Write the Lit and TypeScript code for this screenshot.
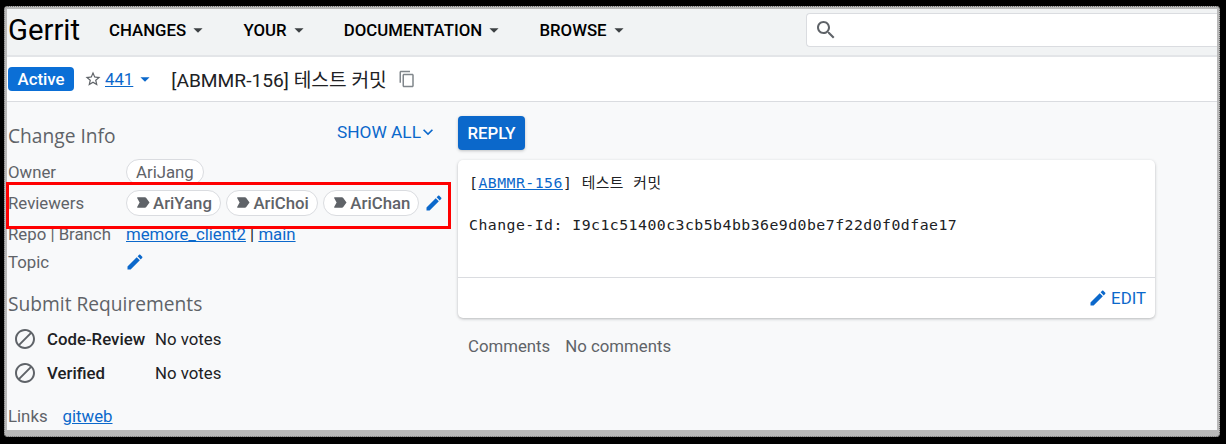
import { LitElement, html, css, svg } from 'lit'
import { customElement } from 'lit/decorators.js'

const EDIT = 'M3 17.25V21h3.75L17.81 9.94l-3.75-3.75L3 17.25zM20.71 7.04c.39-.39.39-1.02 0-1.41l-2.34-2.34c-.39-.39-1.02-.39-1.41 0l-1.83 1.83 3.75 3.75 1.83-1.83z'
const SEARCH = 'M15.5 14h-.79l-.28-.27C15.41 12.59 16 11.11 16 9.5 16 5.91 13.09 3 9.5 3S3 5.91 3 9.5 5.91 16 9.5 16c1.61 0 3.09-.59 4.23-1.57l.27.28v.79l5 4.99L20.49 19l-4.99-5zm-6 0C7.01 14 5 11.99 5 9.5S7.01 5 9.5 5 14 7.01 14 9.5 11.99 14 9.5 14z'
const STAR = 'M22 9.24l-7.19-.62L12 2 9.19 8.63 2 9.24l5.46 4.73L5.82 21 12 17.27 18.18 21l-1.63-7.03L22 9.24zM12 15.4l-3.76 2.27 1-4.28-3.32-2.88 4.38-.38L12 6.1l1.71 4.04 4.38.38-3.32 2.88 1 4.28L12 15.4z'
const COPY = 'M16 1H4c-1.1 0-2 .9-2 2v14h2V3h12V1zm3 4H8c-1.1 0-2 .9-2 2v14c0 1.1.9 2 2 2h11c1.1 0 2-.9 2-2V7c0-1.1-.9-2-2-2zm0 16H8V7h11v14z'
const BLOCK = 'M12 2C6.48 2 2 6.48 2 12s4.48 10 10 10 10-4.48 10-10S17.52 2 12 2zM4 12c0-4.42 3.58-8 8-8 1.85 0 3.55.63 4.9 1.69L5.69 16.9C4.63 15.55 4 13.85 4 12zm8 8c-1.85 0-3.55-.63-4.9-1.69L18.31 7.1C19.37 8.45 20 10.15 20 12c0 4.42-3.58 8-8 8z'
const ATTENTION = 'M4 4.5h10c.8 0 1.5.4 1.9 1L20.5 12l-4.6 6.5c-.4.6-1.1 1-1.9 1H4c-.8 0-1.2-.9-.8-1.5L6.5 12 3.2 6C2.8 5.4 3.2 4.5 4 4.5z'
const DROP = 'M7 10l5 5 5-5z'
const CHEVRON = 'M7.41 8.59L12 13.17l4.59-4.58L18 10l-6 6-6-6z'

const icon = (d: string, cls = '') => html`<svg class="icon ${cls}" viewBox="0 0 24 24">${svg`<path d=${d}></path>`}</svg>`

@customElement('app-root')
export class AppRoot extends LitElement {
  static styles = css`
    :host {
      display: block;
      width: 1226px;
      height: 444px;
      background: #000;
      font-family: Roboto, "Noto Sans CJK KR", sans-serif;
      font-size: 16.8px;
      color: #202124;
      overflow: hidden;
    }

    .frame {
      position: relative;
      box-sizing: border-box;
      width: 1216px;
      height: 431px;
      margin: 6px 0 0 4px;
      border: 3px solid #b9b9b9;
      border-bottom-width: 7px;
      border-radius: 4px;
      outline: 1px dotted #6b6b6b;
      outline-offset: -1px;
      background: #f8f9fa;
      display: flex;
      flex-direction: column;
    }

    .icon {
      display: block;
      width: 20px;
      height: 20px;
      fill: currentColor;
      flex: none;
    }

    a {
      color: #0b68cb;
      text-decoration: underline;
    }

    /* top bar */
    header {
      height: 42px;
      padding-bottom: 4px;
      background: #f1f3f4;
      border-bottom: 2px solid #e3e5e8;
      display: flex;
      align-items: center;
      flex: none;
    }

    .logo {
      font-size: 29.3px;
      color: #000;
      margin-left: 1px;
      width: 101px;
    }

    nav {
      display: flex;
      align-items: center;
      font-weight: 500;
      color: #000;
      flex: 1;
    }

    .menu {
      display: flex;
      align-items: center;
    }

    .menu .icon {
      width: 22px;
      height: 22px;
      margin-left: 1px;
      color: #3c4043;
    }

    .menu + .menu {
      margin-left: 34.3px;
    }

    .search {
      width: 411px;
      height: 34px;
      box-sizing: border-box;
      background: #fff;
      border: 1px solid #dadce0;
      border-right: 0;
      border-radius: 4px 0 0 4px;
      display: flex;
      align-items: center;
      padding-left: 7px;
      color: #5f6368;
    }

    .search .icon {
      width: 24px;
      height: 24px;
    }

    /* change subject bar */
    .subject {
      height: 44px;
      background: #fff;
      border-bottom: 1px solid #dadce0;
      display: flex;
      align-items: center;
      flex: none;
    }

    .status {
      background: #0b6fd6;
      color: #fff;
      font-weight: 500;
      height: 24px;
      line-height: 24px;
      width: 66px;
      margin-left: 1px;
      text-align: center;
      border-radius: 4px;
    }

    .star {
      width: 18px;
      height: 18px;
      color: #5f6368;
      margin-left: 10px;
    }

    .num {
      margin-left: 3px;
    }

    .drop {
      width: 22px;
      height: 22px;
      margin-left: 1px;
      color: #0b68cb;
    }

    .title {
      margin-left: 15px;
      font-size: 19.2px;
      color: #202124;
    }

    .copy {
      width: 18px;
      height: 18px;
      color: #80868b;
      margin-left: 11px;
    }

    /* content */
    main {
      flex: 1;
      display: flex;
    }

    .left {
      width: 429px;
      margin-left: 1px;
      flex: none;
    }

    .heading {
      font-family: "Open Sans", sans-serif;
      font-size: 19.2px;
      color: #5f6368;
    }

    .info-head {
      display: flex;
      justify-content: space-between;
      align-items: center;
      height: 32px;
      margin-top: 17px;
    }

    .show-all {
      display: flex;
      align-items: center;
      color: #0b68cb;
      font-size: 17.3px;
      margin-top: -6px;
    }

    .show-all .icon {
      margin: 0 -1px 0 -3px;
    }

    .row {
      display: flex;
      align-items: center;
    }

    .label {
      width: 118px;
      color: #5f6368;
      flex: none;
    }

    .chip {
      display: flex;
      align-items: center;
      box-sizing: border-box;
      height: 26px;
      border: 1px solid #dadce0;
      border-radius: 13px;
      padding: 0 9px;
      background: #fff;
      color: #5f6368;
    }

    .chips {
      display: flex;
      gap: 5.5px;
      align-items: center;
    }

    .chip.reviewer {
      font-weight: 500;
      padding: 0 8px;
    }

    .chip .icon {
      width: 17px;
      height: 17px;
      margin-right: 1px;
      color: #5f6368;
    }

    .edit {
      color: #0b68cb;
      margin-left: 5px;
    }

    .topic-edit {
      margin-left: -1px;
    }

    .owner { height: 28px; margin-top: 7px; }
    .reviewers { height: 31px; margin-top: 1px; }
    .repo { height: 26px; margin-top: 3px; }
    .topic { height: 28px; margin-top: 1px; }

    .submit {
      margin-top: 15px;
      line-height: 26px;
    }

    .reqs {
      margin-top: 5px;
    }

    .req {
      display: flex;
      align-items: center;
      height: 34px;
      padding-left: 5px;
    }

    .req .icon {
      width: 24px;
      height: 24px;
      color: #5f6368;
      margin-right: 10px;
    }

    .req b {
      font-weight: 500;
      width: 108px;
    }

    .links {
      display: flex;
      gap: 15px;
      margin-top: 16px;
    }

    .links span {
      color: #5f6368;
    }

    /* commit message */
    .right {
      margin-left: 21px;
      width: 697px;
      padding-top: 14px;
    }

    .reply {
      width: 67px;
      height: 34px;
      line-height: 34px;
      text-align: center;
      background: #0b68cb;
      color: #fff;
      font-weight: 500;
      border-radius: 4px;
      box-shadow: 0 1px 3px rgba(60, 64, 67, 0.3);
    }

    .card {
      margin-top: 10px;
      height: 158px;
      background: #fff;
      border-radius: 5px;
      box-shadow: 0 1px 3px rgba(60, 64, 67, 0.35);
      display: flex;
      flex-direction: column;
    }

    .message {
      flex: 1;
      padding: 12px 11px 0;
      font-family: "DejaVu Sans Mono", "Noto Sans CJK KR", monospace;
      font-size: 14.8px;
      letter-spacing: 0.48px;
      line-height: 21px;
      color: #202124;
      white-space: pre;
      border-bottom: 1px solid #dadce0;
    }

    .card-foot {
      height: 40px;
      display: flex;
      justify-content: flex-end;
      align-items: center;
      gap: 3px;
      padding-right: 9px;
      color: #0b68cb;
    }

    .comments {
      display: flex;
      gap: 15px;
      margin: 18px 0 0 10px;
      color: #5f6368;
    }

    /* red annotation */
    .mark {
      position: absolute;
      left: -1px;
      top: 173px;
      width: 445px;
      height: 47px;
      box-sizing: border-box;
      border: 3px solid #f00;
    }
  `;

  render() {
    return html`
      <div class="frame">
        <header>
          <div class="logo">Gerrit</div>
          <nav>
            <div class="menu">CHANGES${icon(DROP)}</div>
            <div class="menu">YOUR${icon(DROP)}</div>
            <div class="menu">DOCUMENTATION${icon(DROP)}</div>
            <div class="menu">BROWSE${icon(DROP)}</div>
          </nav>
          <div class="search">${icon(SEARCH)}</div>
        </header>
        <div class="subject">
          <div class="status">Active</div>
          ${icon(STAR, 'star')}
          <a class="num">441</a>
          ${icon(DROP, 'drop')}
          <div class="title">[ABMMR-156] 테스트 커밋</div>
          ${icon(COPY, 'copy')}
        </div>
        <main>
          <div class="left">
            <div class="info-head">
              <div class="heading">Change Info</div>
              <div class="show-all">SHOW ALL${icon(CHEVRON)}</div>
            </div>
            <div class="row owner">
              <div class="label">Owner</div>
              <div class="chip">AriJang</div>
            </div>
            <div class="row reviewers">
              <div class="label">Reviewers</div>
              <div class="chips">
                ${['AriYang', 'AriChoi', 'AriChan'].map(
                  (name) => html`<div class="chip reviewer">${icon(ATTENTION)}${name}</div>`
                )}
              </div>
              ${icon(EDIT, 'edit')}
            </div>
            <div class="row repo">
              <div class="label">Repo | Branch</div>
              <div><a>memore_client2</a> | <a>main</a></div>
            </div>
            <div class="row topic">
              <div class="label">Topic</div>
              ${icon(EDIT, 'edit topic-edit')}
            </div>
            <div class="heading submit">Submit Requirements</div>
            <div class="reqs">
              <div class="req">${icon(BLOCK)}<b>Code-Review</b><span>No votes</span></div>
              <div class="req">${icon(BLOCK)}<b>Verified</b><span>No votes</span></div>
            </div>
            <div class="links"><span>Links</span><a>gitweb</a></div>
          </div>
          <div class="right">
            <div class="reply">REPLY</div>
            <div class="card">
              <div class="message">[<a>ABMMR-156</a>] 테스트 커밋

Change-Id: I9c1c51400c3cb5b4bb36e9d0be7f22d0f0dfae17</div>
              <div class="card-foot">${icon(EDIT)}EDIT</div>
            </div>
            <div class="comments"><span>Comments</span><span>No comments</span></div>
          </div>
        </main>
        <div class="mark"></div>
      </div>
    `;
  }
}
